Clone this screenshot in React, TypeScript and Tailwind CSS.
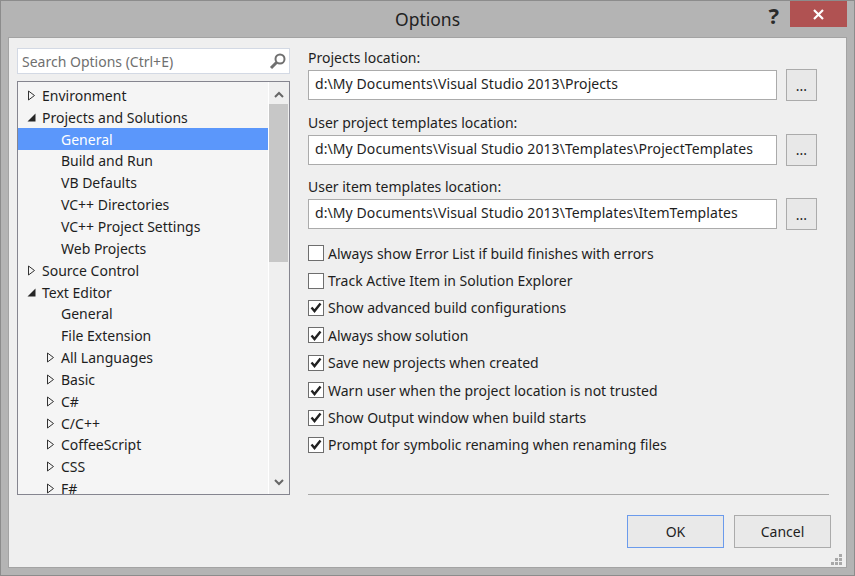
const FONT = "font-['Noto_Sans','Open_Sans',sans-serif]"

type TreeRow = { label: string; depth: number; arrow?: "open" | "closed"; selected?: boolean }

const TREE: TreeRow[] = [
	{ label: "Environment", depth: 0, arrow: "closed" },
	{ label: "Projects and Solutions", depth: 0, arrow: "open" },
	{ label: "General", depth: 1, selected: true },
	{ label: "Build and Run", depth: 1 },
	{ label: "VB Defaults", depth: 1 },
	{ label: "VC++ Directories", depth: 1 },
	{ label: "VC++ Project Settings", depth: 1 },
	{ label: "Web Projects", depth: 1 },
	{ label: "Source Control", depth: 0, arrow: "closed" },
	{ label: "Text Editor", depth: 0, arrow: "open" },
	{ label: "General", depth: 1 },
	{ label: "File Extension", depth: 1 },
	{ label: "All Languages", depth: 1, arrow: "closed" },
	{ label: "Basic", depth: 1, arrow: "closed" },
	{ label: "C#", depth: 1, arrow: "closed" },
	{ label: "C/C++", depth: 1, arrow: "closed" },
	{ label: "CoffeeScript", depth: 1, arrow: "closed" },
	{ label: "CSS", depth: 1, arrow: "closed" },
	{ label: "F#", depth: 1, arrow: "closed" },
]

const FIELDS = [
	{ label: "Projects location:", value: "d:\\My Documents\\Visual Studio 2013\\Projects" },
	{ label: "User project templates location:", value: "d:\\My Documents\\Visual Studio 2013\\Templates\\ProjectTemplates" },
	{ label: "User item templates location:", value: "d:\\My Documents\\Visual Studio 2013\\Templates\\ItemTemplates" },
]

const CHECKS = [
	{ label: "Always show Error List if build finishes with errors", on: false },
	{ label: "Track Active Item in Solution Explorer", on: false },
	{ label: "Show advanced build configurations", on: true },
	{ label: "Always show solution", on: true },
	{ label: "Save new projects when created", on: true },
	{ label: "Warn user when the project location is not trusted", on: true },
	{ label: "Show Output window when build starts", on: true },
	{ label: "Prompt for symbolic renaming when renaming files", on: true },
]

function Arrow({ kind }: { kind: "open" | "closed" }) {
	return (
		<svg width="9" height="11" viewBox="0 0 9 11" className="shrink-0">
			{kind === "closed" ? (
				<path d="M1.5 1 L7.5 5.5 L1.5 10 Z" fill="none" stroke="#333" strokeWidth="1" />
			) : (
				<path d="M0.5 9.5 L8.5 9.5 L8.5 1.5 Z" fill="#262626" />
			)}
		</svg>
	)
}

function Row({ row }: { row: TreeRow }) {
	return (
		<div
			className={`flex h-[21.85px] shrink-0 items-center pt-[1px] ${row.depth ? "pl-[28px]" : "pl-[9px]"} ${
				row.selected ? "bg-[#5b97fb] text-white" : "text-[#1e1e1e]"
			}`}
		>
			<div className="flex w-[15px] shrink-0 items-center">{row.arrow && <Arrow kind={row.arrow} />}</div>
			<span className="whitespace-nowrap">{row.label}</span>
		</div>
	)
}

function Check({ label, on }: { label: string; on: boolean }) {
	return (
		<div className="flex h-[27.4px] items-center gap-[4px]">
			<div className="flex size-[16px] items-center justify-center border border-[#6e6e6e] bg-white">
				{on && (
					<svg width="12" height="11" viewBox="0 0 12 11">
						<path d="M1.5 5.5 L4.5 9 L10.5 1.5" fill="none" stroke="#222" strokeWidth="2.4" />
					</svg>
				)}
			</div>
			<span className="whitespace-nowrap text-[#1e1e1e]">{label}</span>
		</div>
	)
}

export default function App() {
	return (
		<div className={`${FONT} flex h-[576px] w-[855px] flex-col border border-[#8c8c8c] bg-[#b4b4b4] text-[14px]`}>
			{/* Title bar */}
			<div className="relative flex h-[36px] shrink-0 items-center justify-center">
				<span className="text-[17.5px] text-[#222]">Options</span>
				<div className="absolute right-[75px] top-[1px] text-[22px] font-bold leading-[26px] text-[#2a2a2a]">?</div>
				<div className="absolute right-[7px] top-0 flex h-[26px] w-[57px] items-center justify-center bg-[#b05252]">
					<svg width="11" height="11" viewBox="0 0 11 11">
						<path d="M1 1 L10 10 M10 1 L1 10" stroke="#fff" strokeWidth="2.2" />
					</svg>
				</div>
			</div>

			{/* Body */}
			<div className="mx-[7px] flex h-[531px] flex-col border border-[#a3a3a3] bg-[#efefef]">
				<div className="flex flex-1 gap-[18px] pl-[8px] pt-[10px]">
					{/* Left column */}
					<div className="flex w-[273px] shrink-0 flex-col gap-[7px]">
						<div className="flex h-[26px] items-center justify-between border border-[#d3d9e4] bg-white pl-[4px] pr-[2px] text-[#6f6f6f]">
							<span className="pt-[1px]">Search Options (Ctrl+E)</span>
							<svg width="18" height="18" viewBox="0 0 18 18">
								<circle cx="11" cy="7" r="4.5" fill="none" stroke="#707070" strokeWidth="2" />
								<path d="M7.5 10.5 L2 16" stroke="#707070" strokeWidth="3" />
							</svg>
						</div>
						<div className="flex h-[414px] overflow-hidden border border-[#85858f] bg-[#f5f5f5]">
							<div className="flex flex-1 flex-col overflow-hidden pt-[2px]">
								{TREE.map((row, i) => (
									<Row key={i} row={row} />
								))}
							</div>
							<div className="flex w-[21px] shrink-0 flex-col items-center border-l border-white bg-[#efefef] pr-[1px]">
								<svg width="10" height="7" viewBox="0 0 10 7" className="mb-[6px] mt-[9px]">
									<path d="M1 6 L5 2 L9 6" fill="none" stroke="#666" strokeWidth="2" />
								</svg>
								<div className="h-[158px] w-[19px] bg-[#c7c7c7]" />
								<div className="flex-1" />
								<svg width="10" height="7" viewBox="0 0 10 7" className="mb-[8px]">
									<path d="M1 1 L5 5 L9 1" fill="none" stroke="#666" strokeWidth="2" />
								</svg>
							</div>
						</div>
					</div>

					{/* Right column */}
					<div className="flex flex-1 flex-col">
						{FIELDS.map(f => (
							<div key={f.label} className="flex h-[64.5px] flex-col">
								<div className="h-[21px] leading-[20px] text-[#1e1e1e]">{f.label}</div>
								<div className="flex items-center gap-[9px]">
									<div className="flex h-[30px] w-[469px] items-center border border-[#ababab] bg-white pb-[3px] pl-[6px] tracking-[0.08px] text-[#1e1e1e]">
										<span className="whitespace-nowrap">{f.value}</span>
									</div>
									<div className="flex h-[32px] w-[31px] items-center justify-center border border-[#ababab] bg-[#e8e8e8] text-[#1e1e1e]">
										...
									</div>
								</div>
							</div>
						))}
						<div className="mt-[-2px] flex flex-col">
							{CHECKS.map(c => (
								<Check key={c.label} label={c.label} on={c.on} />
							))}
						</div>
						<div className="mr-[17px] mt-[35px] h-px bg-[#a8a8a8]" />
						<div className="mr-[15px] mt-[20px] flex justify-end gap-[10px]">
							<div className="flex h-[33px] w-[97px] items-center justify-center border border-[#6b9bec] bg-[#e9e9e9] text-[#1e1e1e]">
								OK
							</div>
							<div className="flex h-[33px] w-[97px] items-center justify-center border border-[#ababab] bg-[#e9e9e9] text-[#1e1e1e]">
								Cancel
							</div>
						</div>
					</div>
				</div>
				<div className="flex justify-end pb-[1px] pr-[3px]">
					<svg width="12" height="12" viewBox="0 0 12 12" fill="#a8a8a8">
						<rect x="8" y="0" width="3" height="3" />
						<rect x="4" y="4" width="3" height="3" />
						<rect x="8" y="4" width="3" height="3" />
						<rect x="0" y="8" width="3" height="3" />
						<rect x="4" y="8" width="3" height="3" />
						<rect x="8" y="8" width="3" height="3" />
					</svg>
				</div>
			</div>
		</div>
	)
}
